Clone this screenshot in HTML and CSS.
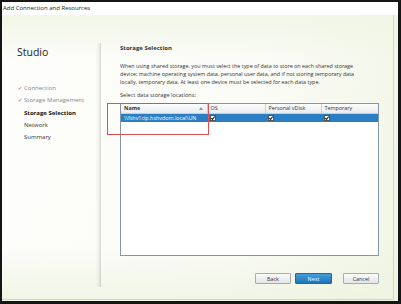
FILE: index.html
```html
<!DOCTYPE html>
<html lang="en">
<head>
    <meta charset="UTF-8">
    <title>Add Connection and Resources</title>
    <link rel="stylesheet" href="styles.css">
</head>
<body>
    <div class="window">
        <div class="titlebar">Add Connection and Resources</div>
        <div class="content">
            <div class="frame">
                <div class="sidebar">
                    <div class="brand">Studio</div>
                    <ul class="steps">
                        <li class="done"><span class="mark">&#10004;</span>Connection</li>
                        <li class="done"><span class="mark">&#10004;</span>Storage Management</li>
                        <li class="current">Storage Selection</li>
                        <li>Network</li>
                        <li>Summary</li>
                    </ul>
                </div>
                <div class="main">
                    <h2>Storage Selection</h2>
                    <p class="intro">When using shared storage, you must select the type of data to store on each shared storage<br>device; machine operating system data, personal user data, and if not storing temporary data<br>locally, temporary data. At least one device must be selected for each data type.</p>
                    <div class="label">Select data storage locations:</div>
                    <div class="grid">
                        <table>
                            <tr>
                                <th class="col-name">Name
                                    <svg class="sort" width="4" height="3" viewBox="0 0 4 3"><path d="M0 3 L2 0 L4 3 Z" fill="#999"/></svg>
                                </th>
                                <th class="col-os">OS</th>
                                <th class="col-pvd">Personal vDisk</th>
                                <th class="col-tmp">Temporary</th>
                            </tr>
                            <tr class="selected">
                                <td>\\fshv1cip.hshvdom.local\UN</td>
                                <td><svg class="check" width="6" height="6" viewBox="0 0 6 6"><rect x="0.5" y="0.5" width="5" height="5" fill="#fff" stroke="#555"/><path d="M1.3 3 L2.5 4.3 L4.8 1.5" fill="none" stroke="#111" stroke-width="1.1"/></svg></td>
                                <td><svg class="check" width="6" height="6" viewBox="0 0 6 6"><rect x="0.5" y="0.5" width="5" height="5" fill="#fff" stroke="#555"/><path d="M1.3 3 L2.5 4.3 L4.8 1.5" fill="none" stroke="#111" stroke-width="1.1"/></svg></td>
                                <td><svg class="check" width="6" height="6" viewBox="0 0 6 6"><rect x="0.5" y="0.5" width="5" height="5" fill="#fff" stroke="#555"/><path d="M1.3 3 L2.5 4.3 L4.8 1.5" fill="none" stroke="#111" stroke-width="1.1"/></svg></td>
                            </tr>
                        </table>
                        <div class="highlight"></div>
                    </div>
                    <div class="actions">
                        <button class="btn">Back</button>
                        <button class="btn primary">Next</button>
                        <button class="btn cancel">Cancel</button>
                    </div>
                </div>
            </div>
        </div>
    </div>
</body>
</html>
```

FILE: styles.css
```css
* {
    box-sizing: border-box;
}
body {
    margin: 0;
    background-color: #fff;
    font-family: "Open Sans", "Noto Sans", sans-serif;
}
.window {
    width: 401px;
    height: 304px;
    border-style: solid;
    border-color: #151515;
    border-width: 2px 3px 3px 2px;
    display: flex;
    flex-direction: column;
}
.titlebar {
    height: 13px;
    line-height: 12px;
    padding-left: 1px;
    font-size: 6px;
    color: #222;
    background-color: #fff;
}
.content {
    flex-grow: 1;
    display: flex;
    padding-right: 4px;
    padding-bottom: 1px;
    background:
        linear-gradient(180deg, rgba(240,245,228,0.9) 0px, rgba(255,255,255,0) 45px, rgba(255,255,255,0) 230px, rgba(238,243,224,0.8) 100%),
        linear-gradient(100deg, #fdfdfb 0%, #fbfcf7 60%, #f1f5e5 100%);
}
.frame {
    flex-grow: 1;
    display: flex;
    border-right: 1px solid #c9d6e2;
    border-bottom: 1px solid #c9d6e2;
}
.sidebar {
    flex-shrink: 0;
    width: 99px;
    padding-top: 31px;
    padding-left: 15px;
    background-image: linear-gradient(90deg, rgba(0,0,0,0) 0%, rgba(0,0,0,0.05) 60%, rgba(0,0,0,0.16) 100%);
    background-size: 5px 244px;
    background-position: right 0 top 28px;
    background-repeat: no-repeat;
}
.brand {
    font-size: 10.5px;
    line-height: 12px;
    font-weight: 500;
    color: #222;
}
.steps {
    list-style: none;
    margin: 24px 0 0 0;
    padding: 0;
}
.steps li {
    font-size: 6px;
    line-height: 12.35px;
    color: #333;
    padding-left: 7px;
    white-space: nowrap;
}
.steps li.done {
    color: #8a8a8a;
    padding-left: 1px;
}
.steps li.current {
    font-weight: 700;
    color: #111;
}
.mark {
    display: inline-block;
    width: 6px;
    font-size: 5px;
    color: #999;
}
.main {
    flex-grow: 1;
    min-width: 0;
    margin-top: 28px;
    margin-bottom: 12px;
    padding: 1px 14px 0 19px;
    display: flex;
    flex-direction: column;
}
h2 {
    margin: 0;
    font-size: 6px;
    line-height: 8px;
    font-weight: 700;
    color: #333;
}
.intro {
    margin: 10px 0 0 0;
    font-size: 5.4px;
    line-height: 8px;
    color: #333;
    white-space: nowrap;
}
.label {
    margin-top: 5px;
    font-size: 5.6px;
    line-height: 8px;
    color: #333;
}
.grid {
    position: relative;
    margin-top: 4px;
    height: 153px;
    border: 1px solid #8596a8;
    background-color: #fff;
}
table {
    width: 100%;
    border-collapse: collapse;
    table-layout: fixed;
    font-size: 5.4px;
}
th {
    height: 9px;
    padding: 0 0 0 3px;
    text-align: left;
    font-weight: 400;
    color: #333;
    background: linear-gradient(180deg, #fdfdfd, #e8ebee);
    border-right: 1px solid #c8ced5;
    border-bottom: 1px solid #c8ced5;
}
th.col-name {
    width: 86px;
    font-weight: 700;
}
th.col-os {
    width: 58px;
}
th.col-pvd {
    width: 56px;
}
th.col-tmp {
    border-right: none;
}
.sort {
    float: right;
    margin: 3px 4px 0 0;
}
.selected td {
    height: 8px;
    padding: 0 0 0 3px;
    color: #fff;
    background-color: #2b7ec3;
    white-space: nowrap;
    overflow: hidden;
}
.check {
    display: block;
}
.highlight {
    position: absolute;
    left: -14px;
    top: -1px;
    width: 102px;
    height: 32px;
    border: 1.5px solid #db4f55;
}
.actions {
    margin-top: 17px;
    display: flex;
    justify-content: flex-end;
}
.btn {
    width: 36px;
    height: 11px;
    margin: 0 0 0 4px;
    padding: 0;
    font-family: "Open Sans", "Noto Sans", sans-serif;
    font-size: 5.4px;
    color: #333;
    border: 1px solid #a9adb2;
    border-radius: 1px;
    background: linear-gradient(180deg, #fbfbfb, #e2e4e6);
}
.btn.primary {
    width: 37px;
    color: #fff;
    border-color: #1d69a6;
    background: linear-gradient(180deg, #449ddb, #1f74b8);
}
.btn.cancel {
    margin-left: 11px;
}
```
